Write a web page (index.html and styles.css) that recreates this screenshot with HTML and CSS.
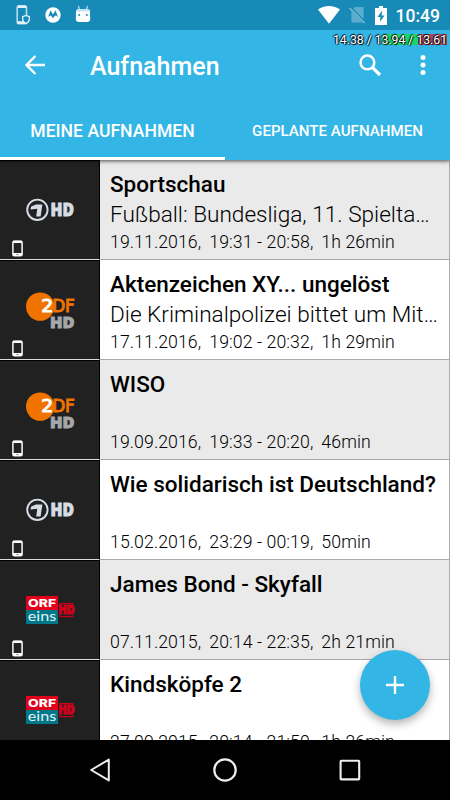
FILE: index.html
```html
<!DOCTYPE html>
<html lang="de">
<head>
    <meta charset="UTF-8">
    <meta name="viewport" content="width=device-width, initial-scale=1.0">
    <title>Aufnahmen</title>
    <link rel="stylesheet" href="styles.css">
</head>
<body>
    <!-- Shared shapes -->
    <svg class="symbols" width="0" height="0">
        <symbol id="ard" viewBox="0 0 100 98">
            <circle cx="37.4" cy="48.8" r="10.2" fill="none" stroke="#d5dde6" stroke-width="1.9"/>
            <path d="M30.4 48.6 L31.2 45.6 L36 43.4 H42.4 L40.6 55.6 H36.2 L37.3 47.8 Z" fill="#d5dde6"/>
        </symbol>
        <symbol id="phone" viewBox="0 0 12 18">
            <rect x="1" y="1" width="10" height="16" rx="1.6" fill="#222" stroke="#fff" stroke-width="1.6"/>
            <path d="M1 1.8 H11 M1 15.2 H11" stroke="#fff" stroke-width="2.6"/>
            <path d="M5 15.6 H7.2" stroke="#777" stroke-width="1"/>
        </symbol>
    </svg>

    <div class="screen">
        <header class="header">
            <div class="status-bar">
                <div class="status-left">
                    <svg width="15" height="20" viewBox="0 0 15 20">
                        <rect x="1.2" y="1.2" width="9.3" height="17.4" rx="1.4" fill="none" stroke="#b9dcea" stroke-width="1.6"/>
                        <path d="M1.5 1.6 H10.3 M1.5 17.6 H9" stroke="#e4f3f8" stroke-width="2.6"/>
                        <path d="M10 10.4 L13.3 11.6 V14.6 C13.3 16.6 11.7 17.8 10 18.6 C8.3 17.8 6.7 16.6 6.7 14.6 V11.6 Z" fill="#188ab8" stroke="#e4f3f8" stroke-width="1.3"/>
                    </svg>
                    <svg width="16" height="16" viewBox="0 0 16 16">
                        <circle cx="8" cy="8" r="7.7" fill="#fff"/>
                        <path d="M2.8 10.8 L5.5 3.2 L8 7.4 L10.5 3.2 L13.2 10.8 C12.4 9.5 11.4 8.8 10.6 8.6 C9.5 9 8.6 10.4 8 11.6 C7.4 10.4 6.5 9 5.4 8.6 C4.6 8.8 3.6 9.5 2.8 10.8 Z" fill="#188ab8"/>
                    </svg>
                    <svg class="android" width="16" height="18" viewBox="0 0 16 18">
                        <path d="M3.4 1 L4.8 5 M12.6 1 L11.2 5" stroke="#b9dcea" stroke-width="1.2"/>
                        <path d="M1 6.5 C1.2 4.8 2.5 4 4.5 4 H11.5 C13.5 4 14.8 4.8 15 6.5 L15.2 14 C15.2 16 14 17 12 17 H4 C2 17 .8 16 .8 14 Z" fill="#fff"/>
                        <path d="M1 6.5 C1.2 4.8 2.5 4 4.5 4 H11.5 C13.5 4 14.8 4.8 15 6.5 Z" fill="#c5e3ee"/>
                        <circle cx="4.2" cy="10" r="1" fill="#188ab8"/>
                        <circle cx="11.8" cy="10" r="1" fill="#188ab8"/>
                    </svg>
                </div>
                <div class="status-right">
                    <svg width="22" height="18" viewBox="0 0 22 18">
                        <path d="M0 3.6 C6 -1.1 16 -1.1 22 3.6 L11 17.7 Z" fill="#fff"/>
                    </svg>
                    <svg width="17" height="18" viewBox="0 0 17 18">
                        <path d="M6 1 H14.6 V16.5 H2.4 V5 Z" fill="#5badcd"/>
                        <path d="M.6 1.2 L16.4 17" stroke="#188ab8" stroke-width="3"/>
                        <path d="M.6 2 L15.6 17" stroke="#7dbfd8" stroke-width="1.3"/>
                    </svg>
                    <svg width="12" height="19" viewBox="0 0 12 19">
                        <path d="M4 0 H8 V2 H12 V19 H0 V2 H4 Z" fill="#fff"/>
                        <path d="M7.2 4.8 L2.4 11 H5.4 L4.8 16 L9.6 9.6 H6.6 Z" fill="#188ab8"/>
                    </svg>
                    <span class="clock">10:49</span>
                </div>
            </div>
            <div class="cpu-load"><span>14.38 / 13.94 / 13.61</span></div>

            <div class="toolbar">
                <svg class="back" width="20" height="20" viewBox="0 0 20 20">
                    <path d="M20 10 H2 M10.4 1 L1.5 10 L10.4 19" fill="none" stroke="#fff" stroke-width="2.4"/>
                </svg>
                <h1>Aufnahmen</h1>
                <svg class="search" width="23" height="23" viewBox="0 0 23 23">
                    <circle cx="8.4" cy="8.4" r="6.9" fill="none" stroke="#fff" stroke-width="2.5"/>
                    <path d="M13.4 13.4 L21 21" stroke="#fff" stroke-width="3.2"/>
                </svg>
                <svg class="more" width="6" height="20" viewBox="0 0 6 20">
                    <circle cx="3" cy="2.6" r="2.5" fill="#fff"/>
                    <circle cx="3" cy="10" r="2.5" fill="#fff"/>
                    <circle cx="3" cy="17.4" r="2.5" fill="#fff"/>
                </svg>
            </div>

            <nav class="tabs">
                <div class="tab active"><span>MEINE AUFNAHMEN</span></div>
                <div class="tab"><span>GEPLANTE AUFNAHMEN</span></div>
            </nav>
        </header>

        <main class="list">
            <article class="recording">
                <div class="channel">
                    <svg class="logo" viewBox="0 0 100 98">
                        <use href="#ard"/>
                        <text class="logo-heavy" x="50.5" y="55.4" font-size="18.4" textLength="23.5" lengthAdjust="spacingAndGlyphs" fill="#d5dde6" stroke="#d5dde6">HD</text>
                    </svg>
                    <svg class="phone"><use href="#phone"/></svg>
                </div>
                <div class="info">
                    <h2>Sportschau</h2>
                    <p class="subtitle">Fußball: Bundesliga, 11. Spielta…</p>
                    <p class="meta"><span>19.11.2016,</span><span>19:31 - 20:58,</span><span>1h 26min</span></p>
                </div>
            </article>
            <article class="recording">
                <div class="channel">
                    <svg class="logo" viewBox="0 0 100 98">
                        <circle cx="40.2" cy="45.6" r="14.2" fill="#f07300"/>
                        <text class="logo-wide" x="41.2" y="51.4" font-size="17" textLength="12" lengthAdjust="spacingAndGlyphs" fill="#fff" stroke="#fff">2</text>
                        <text class="logo-wide" x="52.2" y="51.4" font-size="17" textLength="22.6" lengthAdjust="spacingAndGlyphs" fill="#f07300" stroke="#f07300">DF</text>
                        <text class="logo-heavy" x="50" y="66.5" font-size="16" textLength="24.5" lengthAdjust="spacingAndGlyphs" fill="#a5a7aa" stroke="#a5a7aa">HD</text>
                    </svg>
                    <svg class="phone"><use href="#phone"/></svg>
                </div>
                <div class="info">
                    <h2>Aktenzeichen XY... ungelöst</h2>
                    <p class="subtitle">Die Kriminalpolizei bittet um Mit…</p>
                    <p class="meta"><span>17.11.2016,</span><span>19:02 - 20:32,</span><span>1h 29min</span></p>
                </div>
            </article>
            <article class="recording">
                <div class="channel">
                    <svg class="logo" viewBox="0 0 100 98">
                        <circle cx="40.2" cy="45.6" r="14.2" fill="#f07300"/>
                        <text class="logo-wide" x="41.2" y="51.4" font-size="17" textLength="12" lengthAdjust="spacingAndGlyphs" fill="#fff" stroke="#fff">2</text>
                        <text class="logo-wide" x="52.2" y="51.4" font-size="17" textLength="22.6" lengthAdjust="spacingAndGlyphs" fill="#f07300" stroke="#f07300">DF</text>
                        <text class="logo-heavy" x="50" y="66.5" font-size="16" textLength="24.5" lengthAdjust="spacingAndGlyphs" fill="#a5a7aa" stroke="#a5a7aa">HD</text>
                    </svg>
                    <svg class="phone"><use href="#phone"/></svg>
                </div>
                <div class="info">
                    <h2>WISO</h2>
                    <p class="subtitle"></p>
                    <p class="meta"><span>19.09.2016,</span><span>19:33 - 20:20,</span><span>46min</span></p>
                </div>
            </article>
            <article class="recording">
                <div class="channel">
                    <svg class="logo" viewBox="0 0 100 98">
                        <use href="#ard"/>
                        <text class="logo-heavy" x="50.5" y="55.4" font-size="18.4" textLength="23.5" lengthAdjust="spacingAndGlyphs" fill="#d5dde6" stroke="#d5dde6">HD</text>
                    </svg>
                    <svg class="phone"><use href="#phone"/></svg>
                </div>
                <div class="info">
                    <h2>Wie solidarisch ist Deutschland?</h2>
                    <p class="subtitle"></p>
                    <p class="meta"><span>15.02.2016,</span><span>23:29 - 00:19,</span><span>50min</span></p>
                </div>
            </article>
            <article class="recording">
                <div class="channel">
                    <svg class="logo" viewBox="0 0 100 98">
                        <rect x="26" y="35" width="32" height="14" fill="#e2001a"/>
                        <rect x="26" y="49" width="32" height="14" fill="#00788a"/>
                        <text class="logo-orf" x="28" y="45.8" font-size="10.6" textLength="28" lengthAdjust="spacingAndGlyphs" fill="#fff">ORF</text>
                        <text class="logo-eins" x="27.8" y="59.8" font-size="14" textLength="28.4" lengthAdjust="spacingAndGlyphs" fill="#e6f2f4">eins</text>
                        <path d="M59.8 44 V42.7 H72.7 V45 M59.8 54 V55.6 H72.7 V53.5" fill="none" stroke="#c4021b" stroke-width="1.2"/>
                        <text class="logo-heavy" x="58.2" y="53" font-size="11.6" textLength="16.5" lengthAdjust="spacingAndGlyphs" fill="#d0021b" stroke="#d0021b">HD</text>
                    </svg>
                    <svg class="phone"><use href="#phone"/></svg>
                </div>
                <div class="info">
                    <h2>James Bond - Skyfall</h2>
                    <p class="subtitle"></p>
                    <p class="meta"><span>07.11.2015,</span><span>20:14 - 22:35,</span><span>2h 21min</span></p>
                </div>
            </article>
            <article class="recording">
                <div class="channel">
                    <svg class="logo" viewBox="0 0 100 98">
                        <rect x="26" y="35" width="32" height="14" fill="#e2001a"/>
                        <rect x="26" y="49" width="32" height="14" fill="#00788a"/>
                        <text class="logo-orf" x="28" y="45.8" font-size="10.6" textLength="28" lengthAdjust="spacingAndGlyphs" fill="#fff">ORF</text>
                        <text class="logo-eins" x="27.8" y="59.8" font-size="14" textLength="28.4" lengthAdjust="spacingAndGlyphs" fill="#e6f2f4">eins</text>
                        <path d="M59.8 44 V42.7 H72.7 V45 M59.8 54 V55.6 H72.7 V53.5" fill="none" stroke="#c4021b" stroke-width="1.2"/>
                        <text class="logo-heavy" x="58.2" y="53" font-size="11.6" textLength="16.5" lengthAdjust="spacingAndGlyphs" fill="#d0021b" stroke="#d0021b">HD</text>
                    </svg>
                </div>
                <div class="info">
                    <h2>Kindsköpfe 2</h2>
                    <p class="subtitle"></p>
                    <p class="meta"><span>27.09.2015,</span><span>20:14 - 21:50,</span><span>1h 26min</span></p>
                </div>
            </article>
        </main>

        <button class="fab" aria-label="Neue Aufnahme">
            <svg width="18" height="18" viewBox="0 0 18 18">
                <path d="M9 0 V18 M0 9 H18" stroke="#fff" stroke-width="2.4"/>
            </svg>
        </button>

        <footer class="nav-bar">
            <svg width="26" height="26" viewBox="0 0 26 26">
                <path d="M21.8 2.6 V23.4 L4.2 13 Z" fill="none" stroke="#eee" stroke-width="2" stroke-linejoin="round"/>
            </svg>
            <svg width="26" height="26" viewBox="0 0 26 26">
                <circle cx="13" cy="13" r="10.7" fill="none" stroke="#eee" stroke-width="2.2"/>
            </svg>
            <svg width="26" height="26" viewBox="0 0 26 26">
                <rect x="3.6" y="3.8" width="18.6" height="18.6" rx=".6" fill="none" stroke="#eee" stroke-width="2.1"/>
            </svg>
        </footer>
    </div>
</body>
</html>
```
FILE: styles.css
```css
* {
    box-sizing: border-box;
}

body {
    margin: 0;
    font-family: Roboto, "Liberation Sans", sans-serif;
    background-color: #000;
}

h1, h2, p {
    margin: 0;
}

svg {
    display: block;
    flex: none;
}

.symbols {
    position: absolute;
}

.screen {
    position: relative;
    display: flex;
    flex-direction: column;
    width: 450px;
    height: 800px;
    overflow: hidden;
}

/* Header */
.header {
    position: relative;
    z-index: 1;
    display: flex;
    flex-direction: column;
    flex: none;
    height: 160px;
    background-color: #33b5e5;
    color: #fff;
    box-shadow: 0 1px 4px rgba(0, 0, 0, 0.7);
}

.status-bar {
    display: flex;
    justify-content: space-between;
    align-items: center;
    height: 30px;
    padding: 0 10px 0 16px;
    background-color: #188ab8;
}

.status-left {
    display: flex;
    align-items: center;
    gap: 14px;
}

.android {
    margin-bottom: 3px;
}

.status-right {
    display: flex;
    align-items: center;
    gap: 9px;
}

.clock {
    padding-top: 1px;
    font-size: 17.5px;
    font-weight: 500;
}

/* CPU load overlay of the developer options */
.cpu-load {
    position: absolute;
    top: 34px;
    right: 3px;
    height: 11px;
    padding-left: 4px;
    font-size: 12.2px;
    line-height: 12px;
    white-space: nowrap;
    background: linear-gradient(to right, transparent 53px, #17d769 53px, #17d769 89px, #a34a63 89px);
    text-shadow: 1px 1px 1px #000, -1px 0 1px #000, 0 -1px 1px #000;
}

.toolbar {
    display: flex;
    align-items: center;
    height: 70px;
    padding: 0 24px 0 25px;
}

.toolbar h1 {
    flex: 1;
    margin-left: 45px;
    font-size: 25px;
    font-weight: 500;
    line-height: 30px;
    padding-top: 3px;
}

.more {
    margin-left: 38px;
}

.tabs {
    display: flex;
    height: 60px;
}

.tab {
    display: flex;
    flex: 1;
    justify-content: center;
    align-items: center;
    border-bottom: 3px solid transparent;
    padding-top: 4px;
    font-size: 15.1px;
    font-weight: 500;
}

.tab.active {
    border-bottom-color: #fff;
    padding-top: 5px;
    font-size: 17.6px;
}

/* Recordings */
.list {
    flex: 1;
    overflow: hidden;
}

.recording {
    display: flex;
    height: 100px;
    background-color: #fff;
    border-bottom: 1px solid #aaa;
    border-right: 1px solid #aaa;
}

.recording:nth-child(odd) {
    background-color: #eaeaea;
}

.channel {
    position: relative;
    flex: none;
    width: 100px;
    height: 100px;
    background-color: #212121;
    border: solid #000;
    border-width: 1px 1px 0 0;
    border-bottom: 1px solid #ddd;
}

.logo {
    width: 100px;
    height: 98px;
}

.phone {
    position: absolute;
    left: 12px;
    bottom: 2px;
    width: 11px;
    height: 17px;
}

.logo-heavy {
    font-family: "Open Sans", sans-serif;
    font-weight: 800;
    stroke-width: 0.9;
}

.logo-wide {
    font-family: "DejaVu Sans", sans-serif;
    font-weight: 400;
    stroke-width: 1;
}

.logo-orf {
    font-family: Inter, sans-serif;
    font-weight: 800;
}

.logo-eins {
    font-family: Lato, sans-serif;
}

.info {
    flex: 1;
    min-width: 0;
    padding: 10px 9px 0 10px;
    color: #000;
}

.info h2 {
    height: 29px;
    font-size: 22.5px;
    font-weight: 500;
    line-height: 29px;
    white-space: nowrap;
}

.subtitle {
    height: 29px;
    font-size: 22.6px;
    font-weight: 300;
    line-height: 31px;
    white-space: nowrap;
}

.meta {
    display: flex;
    gap: 8px;
    font-size: 17.7px;
    font-weight: 300;
    letter-spacing: 0.08px;
    line-height: 28px;
}

/* Floating button */
.fab {
    position: absolute;
    right: 20px;
    bottom: 80px;
    z-index: 2;
    display: flex;
    justify-content: center;
    align-items: center;
    width: 70px;
    height: 70px;
    padding: 0;
    border: 0;
    border-radius: 50%;
    background-color: #33b5e5;
    box-shadow: 0 4px 9px rgba(0, 0, 0, 0.3);
}

/* System navigation */
.nav-bar {
    z-index: 3;
    display: flex;
    justify-content: center;
    align-items: center;
    gap: 99px;
    flex: none;
    height: 60px;
    background-color: #000;
}
```
